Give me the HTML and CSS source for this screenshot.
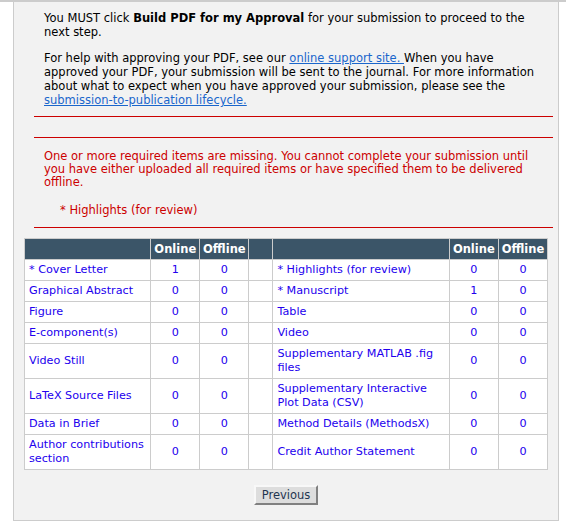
FILE: index.html
```html
<!DOCTYPE html>
<html lang="en">
<head>
  <meta charset="UTF-8">
  <title>Approve Submission</title>
  <link rel="stylesheet" href="styles.css">
</head>
<body>
  <div class="topbar"></div>
  <div class="panel">
    <div class="notes">
      <p class="intro">You MUST click <b>Build PDF for my Approval</b> for your submission to proceed to the next step.</p>
      <p class="help">For help with approving your PDF, see our <a href="#">online support site. </a>When you have approved your PDF, your submission will be sent to the journal. For more information about what to expect when you have approved your submission, please see the <a href="#">submission-to-publication lifecycle.</a></p>
      <div class="rule rule-first"></div>
      <div class="rule rule-second"></div>
      <p class="warning">One or more required items are missing. You cannot complete your submission until you have either uploaded all required items or have specified them to be delivered offline.</p>
      <p class="missing">* Highlights (for review)</p>
      <div class="rule rule-last"></div>
    </div>

    <table class="items">
      <colgroup>
        <col class="c-name1">
        <col class="c-num">
        <col class="c-num">
        <col class="c-gap">
        <col class="c-name2">
        <col class="c-num">
        <col class="c-num">
      </colgroup>
      <thead>
        <tr>
          <th></th><th>Online</th><th>Offline</th><th></th><th></th><th>Online</th><th>Offline</th>
        </tr>
      </thead>
      <tbody>
        <tr>
          <td>* Cover Letter</td><td class="num">1</td><td class="num">0</td><td></td>
          <td>* Highlights (for review)</td><td class="num">0</td><td class="num">0</td>
        </tr>
        <tr>
          <td>Graphical Abstract</td><td class="num">0</td><td class="num">0</td><td></td>
          <td>* Manuscript</td><td class="num">1</td><td class="num">0</td>
        </tr>
        <tr>
          <td>Figure</td><td class="num">0</td><td class="num">0</td><td></td>
          <td>Table</td><td class="num">0</td><td class="num">0</td>
        </tr>
        <tr>
          <td>E-component(s)</td><td class="num">0</td><td class="num">0</td><td></td>
          <td>Video</td><td class="num">0</td><td class="num">0</td>
        </tr>
        <tr>
          <td>Video Still</td><td class="num">0</td><td class="num">0</td><td></td>
          <td>Supplementary MATLAB .fig files</td><td class="num">0</td><td class="num">0</td>
        </tr>
        <tr>
          <td>LaTeX Source Files</td><td class="num">0</td><td class="num">0</td><td></td>
          <td>Supplementary Interactive Plot Data (CSV)</td><td class="num">0</td><td class="num">0</td>
        </tr>
        <tr>
          <td>Data in Brief</td><td class="num">0</td><td class="num">0</td><td></td>
          <td>Method Details (MethodsX)</td><td class="num">0</td><td class="num">0</td>
        </tr>
        <tr>
          <td>Author contributions section</td><td class="num">0</td><td class="num">0</td><td></td>
          <td>Credit Author Statement</td><td class="num">0</td><td class="num">0</td>
        </tr>
      </tbody>
    </table>

    <div class="actions">
      <button type="button">Previous</button>
    </div>
  </div>
</body>
</html>
```

FILE: styles.css
```css
* {
  margin: 0;
  padding: 0;
  box-sizing: border-box;
}
body {
  background: #ffffff;
  font-family: "DejaVu Sans", Verdana, sans-serif;
  font-size: 11.5px;
  color: #000;
}
.topbar {
  height: 2px;
  background: #cccccc;
}
.panel {
  margin-left: 13px;
  width: 546px;
  background: #f2f2f2;
  border: 1px solid #cccccc;
  border-top: none;
  padding: 9px 0 15px 10px;
}
.notes {
  margin: 0 5px 0 10px;
}
.notes p {
  padding: 0 10px;
  line-height: 14px;
}
.help {
  margin-top: 12px;
}
.help a {
  color: #1a66cc;
}
.rule {
  border-top: 1px solid #cc0000;
}
.rule-first {
  margin-top: 9px;
}
.rule-second {
  margin-top: 20px;
}
.notes .warning {
  color: #cc0000;
  margin-top: 12px;
  line-height: 13px;
}
.missing {
  color: #cc0000;
  margin-top: 14px;
  text-indent: 16px;
}
.rule-last {
  margin-top: 10px;
}

/* table of submission items */
.items {
  margin-top: 10px;
  width: 524px;
  table-layout: fixed;
  border-collapse: collapse;
  background: #ffffff;
  font-size: 11.2px;
}
.c-name1 { width: 126px; }
.c-num { width: 49px; }
.c-gap { width: 24px; }
.c-name2 { width: 176px; }
.items th, .items td {
  border: 1px solid #cccccc;
  padding: 3px 2px 3px 4px;
  line-height: 14px;
  text-align: left;
  color: #2200ee;
  vertical-align: middle;
}
.items th {
  background: #3b5568;
  color: #ffffff;
  font-size: 11.5px;
  font-weight: bold;
  text-align: center;
  padding: 3px 0;
}
.items td.num {
  text-align: center;
  padding: 3px 0;
}

.actions {
  margin-top: 15px;
  text-align: center;
  padding-right: 10px;
}
.actions button {
  font-family: "DejaVu Sans", Verdana, sans-serif;
  font-size: 11.5px;
  color: #1f3550;
  background: #dddddd;
  border: 2px solid;
  border-color: #f8f8f8 #808080 #808080 #f8f8f8;
  width: 64px;
  height: 20px;
  cursor: pointer;
}
```
